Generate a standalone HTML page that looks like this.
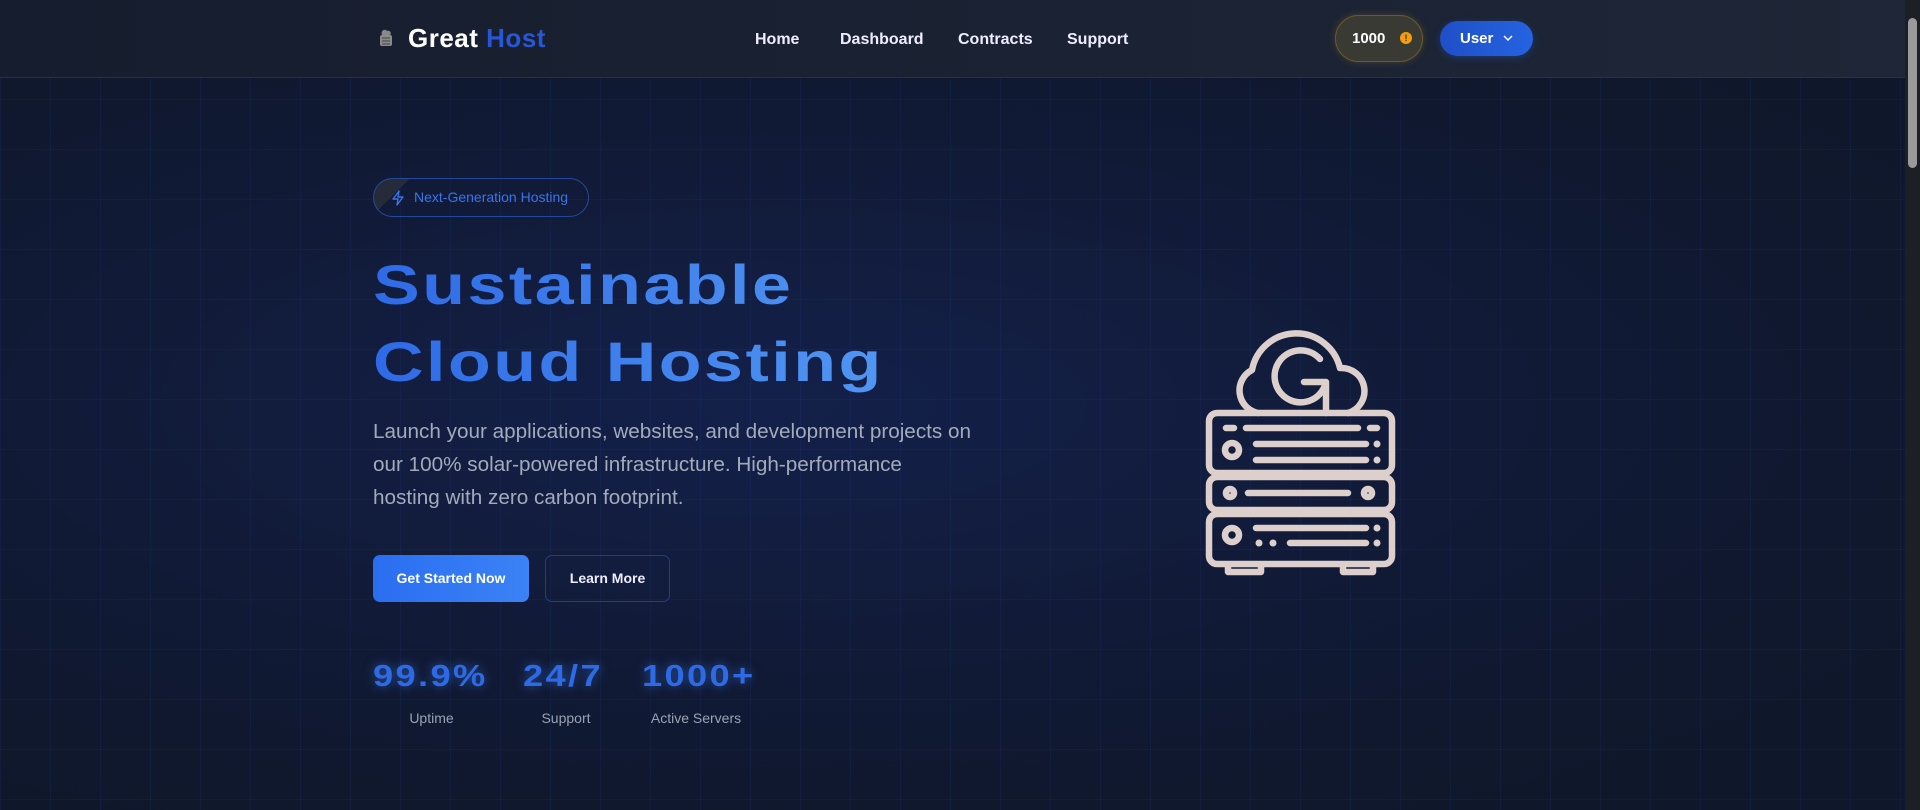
<!DOCTYPE html>
<html><head><meta charset="utf-8"><style>
*{margin:0;padding:0;box-sizing:border-box}
html,body{width:1920px;height:810px;overflow:hidden}
body{font-family:"Liberation Sans",sans-serif;position:relative;
background:
linear-gradient(90deg,rgba(40,80,180,.10) 1px,transparent 1px) 0 0/50px 50px,
linear-gradient(0deg,rgba(40,80,180,.10) 1px,transparent 1px) 0 0/50px 50px,
radial-gradient(ellipse at 40% 50%,#13204a 0%,#111a36 45%,#0f172a 85%);
background-color:#0f172a;}
.nav{position:absolute;left:0;top:0;width:1905px;height:78px;background:linear-gradient(90deg,#161d2e,#1e2637);border-bottom:1px solid #263048}
.logo{position:absolute;left:408px;top:23px;font-size:26px;font-weight:bold;color:#fff;letter-spacing:0.5px}
.logo span{color:#2856d8}
.navl{position:absolute;top:31px;font-size:16px;font-weight:bold;color:#eef}
.coin{position:absolute;left:1335px;top:15px;width:88px;height:47px;border-radius:24px;background:#3a3a34;border:1px solid #6b5a2a;box-shadow:0 0 8px rgba(200,150,40,.25);color:#fff;font-size:15px;font-weight:bold;line-height:45px;padding-left:16px}
.coin i{position:absolute;left:64px;top:16px;width:12px;height:12px;border-radius:50%;background:#f59e0b;color:#3a2a00;font-size:9px;font-style:normal;line-height:12px;text-align:center}
.user{position:absolute;left:1440px;top:21px;width:93px;height:35px;border-radius:18px;background:linear-gradient(90deg,#1f4fc8,#2563e0);color:#fff;font-size:15px;font-weight:bold;line-height:35px;padding-left:20px;box-shadow:0 2px 8px rgba(37,99,235,.3)}
.scroll{position:absolute;left:1905px;top:0;width:15px;height:810px;background:#1c1f26}
.thumb{position:absolute;left:1908px;top:18px;width:9px;height:150px;border-radius:5px;background:#9a9a9a}
.badge{position:absolute;left:373px;top:178px;width:216px;height:39px;border-radius:20px;border:1px solid #234a9a;background:linear-gradient(135deg,#252b38 0 14%,transparent 14%);color:#3b74e8;font-size:14px;line-height:37px;padding-left:40px}
h1{position:absolute;left:373px;top:246px;font-size:56px;line-height:77px;font-weight:bold;letter-spacing:2px;transform:scaleX(1.25);transform-origin:0 0;white-space:nowrap;background:linear-gradient(90deg,#2e6ae6,#5196f2);-webkit-background-clip:text;background-clip:text;color:transparent}
p.lead{position:absolute;left:373px;top:415px;font-size:20.7px;line-height:33px;color:#a3abbb;white-space:nowrap}
.btn1{position:absolute;left:373px;top:555px;width:156px;height:47px;border-radius:7px;background:linear-gradient(90deg,#2a6ef0,#3b82f6);color:#fff;font-weight:bold;font-size:14px;text-align:center;line-height:47px}
.btn2{position:absolute;left:545px;top:555px;width:125px;height:47px;border-radius:7px;border:1px solid #263f7a;color:#eef;font-weight:bold;font-size:14px;text-align:center;line-height:45px}
.num{position:absolute;top:658px;font-size:31px;font-weight:bold;color:#2f6ae6;letter-spacing:2px;transform:scaleX(1.17);transform-origin:0 0;text-shadow:0 0 10px rgba(59,130,246,.55)}
.lab{position:absolute;top:710px;font-size:14px;color:#9aa2b2;text-align:center}
</style></head><body>
<div class="nav">
<svg style="position:absolute;left:379px;top:28px" width="14" height="19" viewBox="0 0 14 19"><path d="M3 7 C1 3 6 0 8 3 C11 2 13 5 11 7Z" fill="#888"/><rect x="1" y="7" width="12" height="11" rx="2" fill="#8a8a8a"/><path d="M3 10h8M3 13h8M3 16h8" stroke="#444" stroke-width="1"/></svg>
<div class="logo">Great <span>Host</span></div>
<div class="navl" style="left:755px">Home</div>
<div class="navl" style="left:840px">Dashboard</div>
<div class="navl" style="left:958px">Contracts</div>
<div class="navl" style="left:1067px">Support</div>
<div class="coin">1000<i>!</i></div>
<div class="user">User <svg style="position:absolute;left:63px;top:14px" width="10" height="7" viewBox="0 0 10 7"><path d="M1 1l4 4 4-4" stroke="#fff" stroke-width="1.5" fill="none"/></svg></div>
</div>
<div class="scroll"></div><div class="thumb"></div>
<div class="badge"><svg style="position:absolute;left:17px;top:11px" width="14" height="16" viewBox="0 0 14 16"><path d="M8 1L2 9h5l-1 6 6-8H7z" stroke="#3b74e8" stroke-width="1.4" fill="none" stroke-linejoin="round"/></svg>Next-Generation Hosting</div>
<h1>Sustainable<br>Cloud Hosting</h1>
<p class="lead">Launch your applications, websites, and development projects on<br>our 100% solar-powered infrastructure. High-performance<br>hosting with zero carbon footprint.</p>
<div class="btn1">Get Started Now</div>
<div class="btn2">Learn More</div>
<div class="num" style="left:373px">99.9%</div>
<div class="num" style="left:523px">24/7</div>
<div class="num" style="left:642px">1000+</div>
<div class="lab" style="left:373px;width:117px">Uptime</div>
<div class="lab" style="left:520px;width:92px">Support</div>
<div class="lab" style="left:640px;width:112px">Active Servers</div>
<svg style="position:absolute;left:1180px;top:310px" width="240" height="270" viewBox="0 0 240 270" fill="none" stroke="#ddd0cc" stroke-width="6.5" stroke-linecap="round" stroke-linejoin="round">
<path d="M78 103 A23 23 0 0 1 72 60 A45 45 0 0 1 160 58 A23 23 0 0 1 168 103"/>
<path d="M140 49 A26 26 0 1 0 146 72 L124 72 M146 72 L146 103"/>
<rect x="29" y="103" width="183" height="60" rx="8"/>
<rect x="29" y="167" width="183" height="33" rx="8"/>
<rect x="29" y="204" width="183" height="50" rx="8"/>
<path d="M48 255v7h33v-7 M163 255v7h30v-7"/>
<path d="M46 118h8 M66 118h112 M190 118h7 M76 134h110 M76 150h110 M68 183h100 M76 218h110 M110 233h76"/>
<circle cx="52" cy="140" r="7"/><circle cx="50" cy="183" r="4"/><circle cx="188" cy="183" r="4"/><circle cx="52" cy="225" r="7"/>
<g fill="#ddd0cc" stroke="none"><circle cx="197" cy="134" r="3.5"/><circle cx="197" cy="150" r="3.5"/><circle cx="197" cy="218" r="3.5"/><circle cx="197" cy="233" r="3.5"/><circle cx="79" cy="233" r="3.5"/><circle cx="93" cy="233" r="3.5"/></g>
</svg>
</body></html>
